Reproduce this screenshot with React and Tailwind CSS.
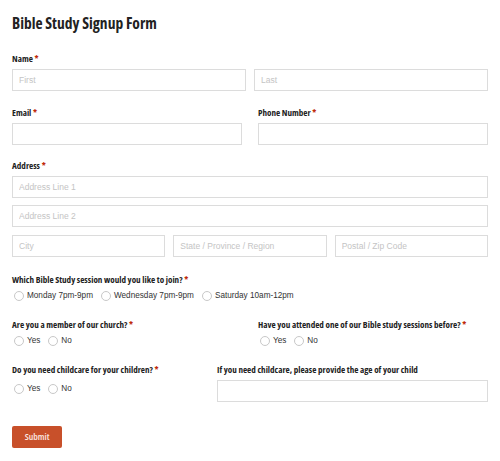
import React from "react";

const condensed = "font-['Open_Sans',sans-serif] font-bold [font-stretch:75%] text-[#222]";

function Label({ children, required, className = "" }) {
  return (
    <div className={`${condensed} text-[9.1px] leading-[12px] whitespace-nowrap ${className}`}>
      {children}
      {required && <span className="text-[#c02b0a]"> *</span>}
    </div>
  );
}

function Field({ placeholder, className = "" }) {
  return (
    <input
      type="text"
      placeholder={placeholder}
      className={`h-[22px] w-full border border-[#dcdcdc] bg-white px-[6px] text-[8.5px] font-['Liberation_Sans',Arial,sans-serif] text-[#333] placeholder:text-[#c4c4c4] outline-none ${className}`}
    />
  );
}

function Radio({ label }) {
  return (
    <label className="flex items-center gap-[3px]">
      <span className="h-[10px] w-[10px] rounded-full border border-[#c8c8c8] bg-white" />
      <span>{label}</span>
    </label>
  );
}

function RadioRow({ options }) {
  return (
    <div className="mt-[4px] flex h-[12px] items-center gap-[8px] pl-[2px] font-['Liberation_Sans',Arial,sans-serif] text-[8.2px] text-[#333]">
      {options.map((o) => (
        <Radio key={o} label={o} />
      ))}
    </div>
  );
}

export default function App() {
  return (
    <div className="h-[461px] w-[500px] bg-white px-[12px] pt-[12px]">
      <h1 className={`${condensed} text-[15.5px] leading-[22px] text-[#111]`}>Bible Study Signup Form</h1>

      <Label required className="mt-[19px]">Name</Label>
      <div className="mt-[4px] grid grid-cols-2 gap-[8px]">
        <Field placeholder="First" />
        <Field placeholder="Last" />
      </div>

      <div className="mt-[16px] grid grid-cols-2 gap-[16px]">
        <div>
          <Label required>Email</Label>
          <Field className="mt-[4px]" />
        </div>
        <div>
          <Label required>Phone Number</Label>
          <Field className="mt-[4px]" />
        </div>
      </div>

      <Label required className="mt-[15px]">Address</Label>
      <div className="mt-[4px] flex flex-col gap-[7px]">
        <Field placeholder="Address Line 1" />
        <Field placeholder="Address Line 2" />
        <div className="mt-[1px] grid grid-cols-3 gap-[8px]">
          <Field placeholder="City" />
          <Field placeholder="State / Province / Region" />
          <Field placeholder="Postal / Zip Code" />
        </div>
      </div>

      <Label required className="mt-[17px]">Which Bible Study session would you like to join?</Label>
      <RadioRow options={["Monday 7pm-9pm", "Wednesday 7pm-9pm", "Saturday 10am-12pm"]} />

      <div className="mt-[17px] grid grid-cols-2 gap-[16px]">
        <div>
          <Label required>Are you a member of our church?</Label>
          <RadioRow options={["Yes", "No"]} />
        </div>
        <div>
          <Label required>Have you attended one of our Bible study sessions before?</Label>
          <RadioRow options={["Yes", "No"]} />
        </div>
      </div>

      <div className="mt-[17px] flex gap-[16px]">
        <div className="w-[189px]">
          <Label required>Do you need childcare for your children?</Label>
          <div className="mt-[7px]">
            <RadioRow options={["Yes", "No"]} />
          </div>
        </div>
        <div className="flex-1">
          <Label>If you need childcare, please provide the age of your child</Label>
          <Field className="mt-[4px]" />
        </div>
      </div>

      <button className={`mt-[24px] h-[22px] w-[50px] rounded-[2px] bg-[#c8502a] font-['Open_Sans',sans-serif] font-semibold [font-stretch:75%] text-[9.5px] text-[#fbe9e2]`}>
        Submit
      </button>
    </div>
  );
}
